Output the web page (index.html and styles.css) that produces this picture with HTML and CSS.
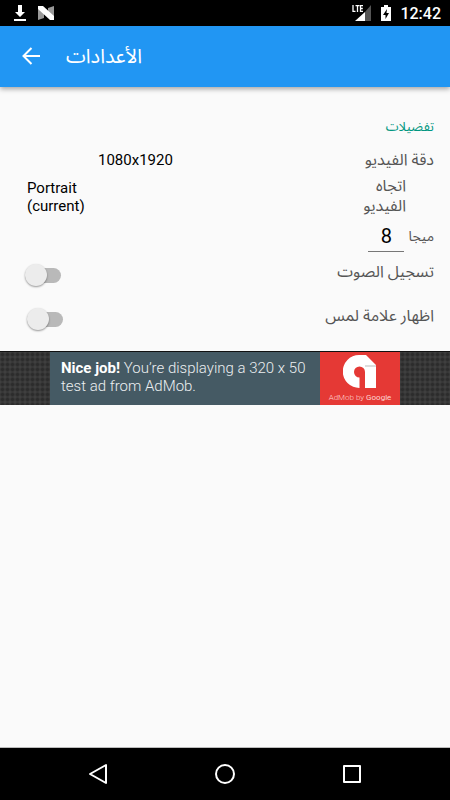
FILE: index.html
```html
<!DOCTYPE html>
<html lang="ar">
<head>
<meta charset="utf-8">
<meta name="viewport" content="width=device-width, initial-scale=1">
<title>الأعدادات</title>
<link rel="stylesheet" href="styles.css">
</head>
<body>
<div class="status">
  <svg width="14" height="18" viewBox="0 0 14 18" fill="#fff"><path d="M5 1h4v7h3l-5 5-5-5h3zM1 15h12v2H1z"/></svg>
  <svg width="18" height="16" viewBox="0 0 18 16"><path fill="#999" d="M1 2l6 2v9l-6 2zM17 1l-6 2v9l6 2z"/><path fill="#fff" d="M1 1h5l11 10v4h-4L1 4z"/></svg>
  <span class="spacer"></span>
  <svg class="signal" width="20" height="18" viewBox="0 0 20 18"><path fill="#555" d="M19 1v16h-6V8z"/><path fill="#fff" d="M3 17L13 8v9z"/><path fill="none" stroke="#fff" stroke-width="1.3" d="M1 1v6.300h2.500M3.500 1.700h4M5.500 1.700V8M11 1.700H8.500v5.600H11M8.500 4.500h2.300"/></svg>
  <svg class="battery" width="12" height="18" viewBox="0 0 12 18"><path fill="#fff" d="M4 1h4v2h3v14H1V3h3z"/><path fill="#000" d="M7 5L3 11h2.500v4L9 9H6.500z"/></svg>
  <span class="clock">12:42</span>
</div>
<header class="appbar">
  <button class="back" type="button" aria-label="رجوع"><svg width="20" height="20" viewBox="0 0 20 20" fill="none" stroke="#fff" stroke-width="2"><path d="M19 10H3M10.500 2L2.500 10l8 8"/></svg></button>
  <h1 dir="rtl">الأعدادات</h1>
</header>
<main>
  <form class="settings" dir="rtl">
    <h2>تفضيلات</h2>
    <div class="row resolution">
      <label for="res">دقة الفيديو</label>
      <select id="res" dir="ltr"><option>1080x1920</option></select>
    </div>
    <div class="row orientation">
      <label for="orient">اتجاه الفيديو</label>
      <button id="orient" type="button" dir="ltr" aria-haspopup="listbox">Portrait (current)</button>
    </div>
    <div class="row bitrate">
      <label for="rate">ميجا</label>
      <input id="rate" type="text" inputmode="numeric" value="8">
    </div>
    <div class="row toggle">
      <label for="audio">تسجيل الصوت</label>
      <input id="audio" type="checkbox" role="switch">
    </div>
    <div class="row toggle touches">
      <label for="touch">اظهار علامة لمس</label>
      <input id="touch" type="checkbox" role="switch">
    </div>
  </form>
  <aside class="ad">
    <a href="#" class="banner">
      <span class="copy"><b>Nice job!</b> You’re displaying a 320 x 50 test ad from AdMob.</span>
      <span class="brand">
        <svg width="34" height="34" viewBox="0 0 34 34"><path fill="#fff" d="M16 0h7l10 10v23H22V17a5.500 5.500 0 1 0-5.500 5.500V33A16.500 16.500 0 0 1 16 0z"/><path fill="#ddd" d="M22 10h11v2H22z"/></svg>
        <span class="by">AdMob by <b>Google</b></span>
      </span>
    </a>
  </aside>
</main>
<nav class="navbar">
  <button type="button" aria-label="Back"><svg width="24" height="24" viewBox="0 0 24 24"><path d="M20 3v18L4 12z"/></svg></button>
  <button type="button" aria-label="Home"><svg width="24" height="24" viewBox="0 0 24 24"><circle cx="12" cy="12" r="9"/></svg></button>
  <button type="button" aria-label="Recents"><svg width="24" height="24" viewBox="0 0 24 24"><path d="M4 4h16v16H4z"/></svg></button>
</nav>
</body>
</html>
```
FILE: styles.css
```css
* { box-sizing: border-box; }
body {
  margin: 0;
  min-height: 100vh;
  display: flex;
  flex-direction: column;
  background: #fafafa;
  color: #000;
  font-family: Roboto, "Noto Sans Arabic", "Noto Sans", "DejaVu Sans", sans-serif;
}
button, input, select { font: inherit; color: inherit; border: 0; margin: 0; padding: 0; background: none; }
svg { display: block; flex: none; }

.status {
  height: 26px;
  padding: 0 9px 0 13px;
  display: flex;
  align-items: center;
  gap: 10px;
  background: #000;
  color: #fff;
}
.spacer { flex: 1; }
.signal { margin-right: -2px; }
.battery { margin-right: -2px; }
.clock { font-size: 16px; font-weight: 500; }

.appbar {
  height: 61px;
  padding: 0 21px 2px;
  display: flex;
  align-items: center;
  gap: 25px;
  background: #2196f3;
  color: #fff;
  box-shadow: 0 2px 5px rgba(0, 0, 0, 0.35);
}
h1 { margin: 0; font-size: 20px; line-height: 28px; font-weight: 400; }

main { flex: 1; }
.settings { padding: 28px 16px 10px; }
h2 { margin: 0 0 8px; font-size: 13px; line-height: 24px; font-weight: 400; color: #009680; }
.row { display: flex; align-items: center; }
label { font-size: 16px; color: #555; }
.resolution { height: 26px; justify-content: space-between; }
.resolution select { width: 80%; max-width: 254px; margin-left: 12px; padding-left: 70px; appearance: none; font-size: 15px; }
.orientation { justify-content: space-between; padding: 3px 28px 0 11px; }
.orientation label { width: 56px; line-height: 20px; }
.orientation button { width: 76px; font-size: 15px; line-height: 18px; text-align: left; padding-top: 2px; }
.bitrate { height: 37px; padding-top: 4px; gap: 4px; }
.bitrate label { font-size: 14px; }
.bitrate input { width: 36px; height: 30px; font-size: 20px; text-align: center; border-bottom: 1px solid #777; border-radius: 0; }
.toggle { height: 44px; justify-content: space-between; padding-left: 9px; }
.touches { padding-left: 11px; }
.toggle label { padding-bottom: 6px; }
.toggle input {
  appearance: none;
  position: relative;
  width: 36px;
  height: 15px;
  border-radius: 8px;
  background: #b9b9b9;
}
.toggle input::before {
  content: "";
  position: absolute;
  left: 0;
  top: -4px;
  width: 22px;
  height: 22px;
  border-radius: 50%;
  background: #ececec;
  box-shadow: 0 1px 2px rgba(0, 0, 0, 0.4);
}

.ad {
  display: flex;
  justify-content: center;
  border-top: 1px solid #111;
  background: radial-gradient(circle, #2c2c2c 1px, #414141 3px) 0 0 / 5px 5px;
}
.banner { display: flex; width: 350px; height: 53px; background: #455a64; color: #eceff1; text-decoration: none; }
.copy { flex: 1; padding: 7px 0 0 11px; font-size: 15px; line-height: 18px; font-weight: 300; }
.copy b { font-weight: 700; color: #fff; }
.brand { width: 80px; display: flex; flex-direction: column; align-items: center; padding-top: 3px; background: #e53935; }
.by { font-size: 8px; line-height: 14px; padding-top: 2px; font-weight: 300; color: #ffd5d3; }
.by b { font-weight: 400; }

.navbar { height: 53px; display: flex; justify-content: center; gap: 103px; align-items: center; background: #000; border-top: 1px solid #bbb; }
.navbar svg { fill: none; stroke: #fff; stroke-width: 2; stroke-linejoin: round; }
```
